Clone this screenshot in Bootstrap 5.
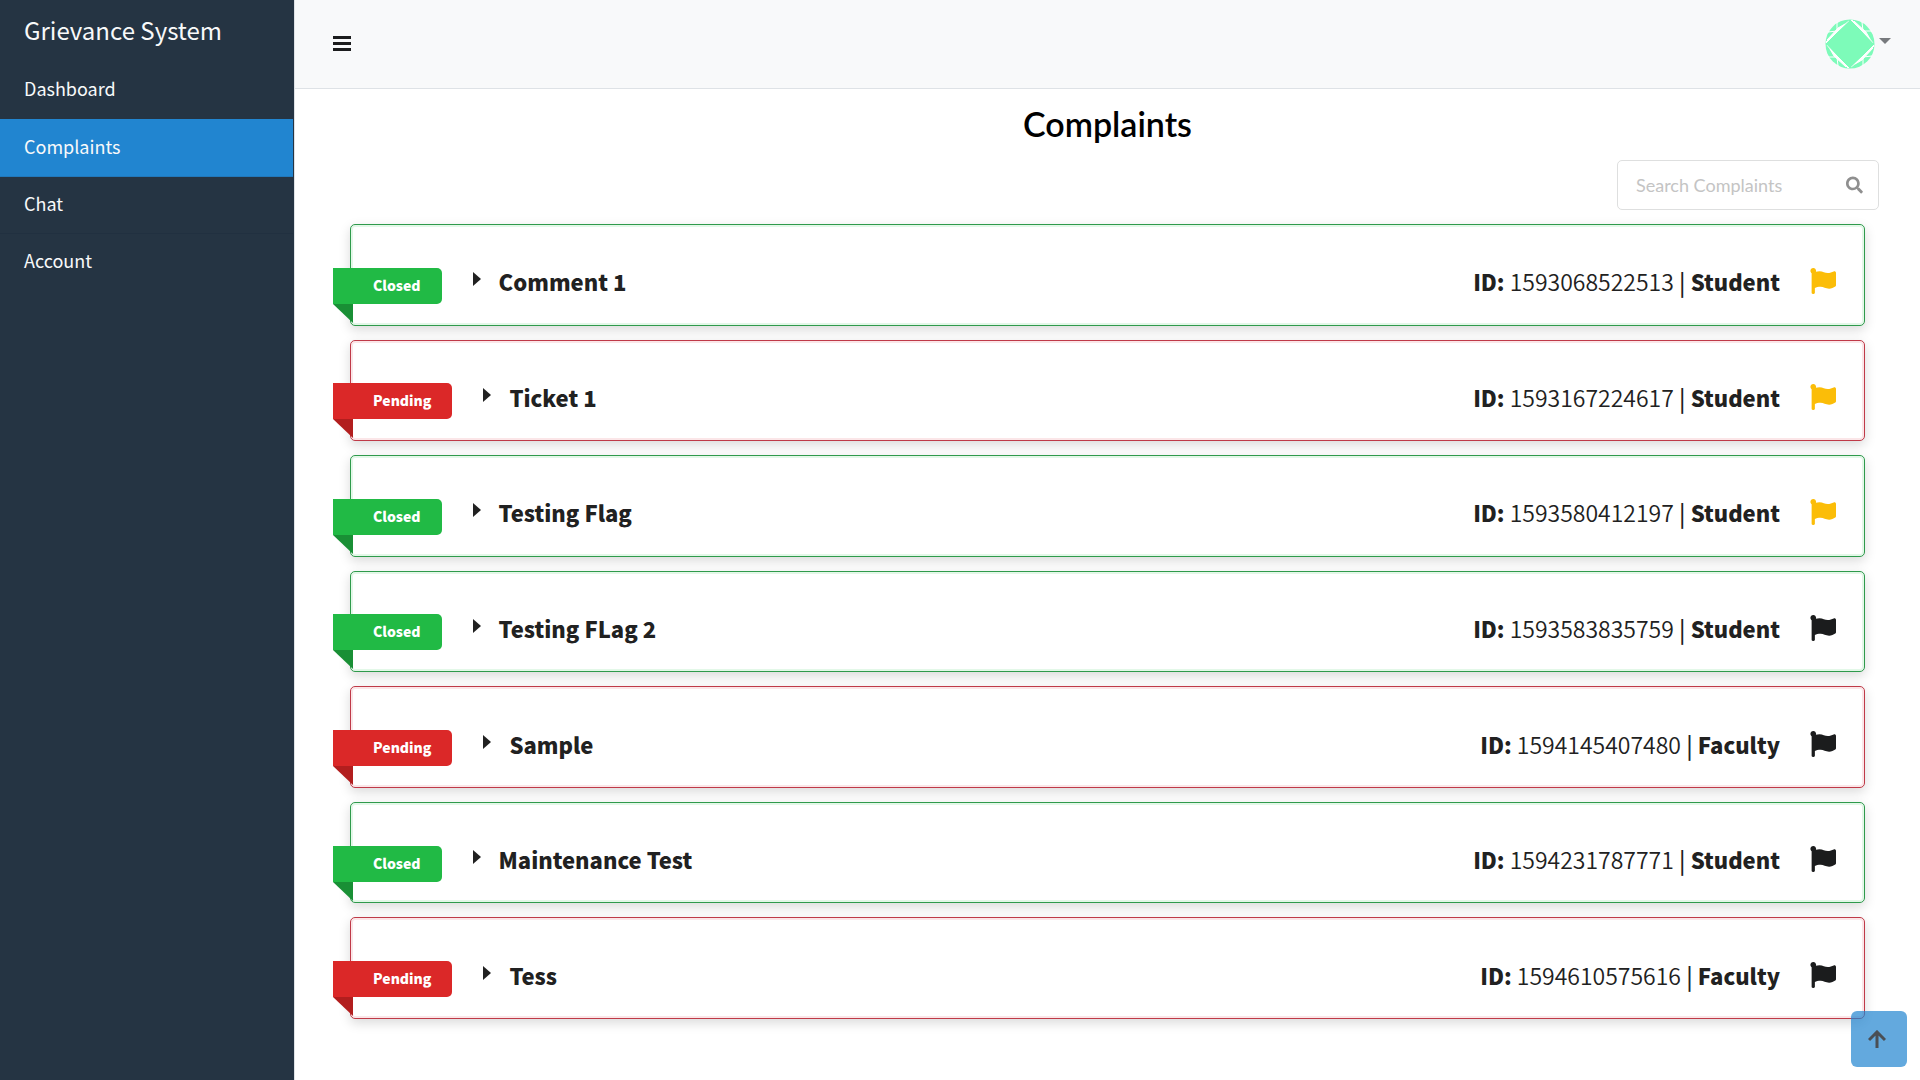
<!DOCTYPE html>
<html lang="en">
<head>
<meta charset="utf-8">
<meta name="viewport" content="width=device-width, initial-scale=1">
<title>Grievance System</title>
<link href="https://cdn.jsdelivr.net/npm/bootstrap@5.3.0/dist/css/bootstrap.min.css" rel="stylesheet">
<style>
  body { font-family: "Noto Sans CJK SC", "Noto Sans", sans-serif; color: #212529; background: #fff; }
  .side { width: 295px; flex: none; background: #253443; border-right: 1px solid #dee2e6; }
  .side-title { color: #f8f9fa; font-size: 24px; line-height: 28px; padding: 16px 24px 18px; }
  .side-link { display: block; color: #f8f9fa; background: #253443; font-size: 18px; line-height: 26px; padding: 13px 24px 17px; margin-right: 1px; border-bottom: 1px solid #213040; text-decoration: none; }
  .side-link.first { border-bottom-color: #253443; }
  .side-link.current { background: #2185d0; border-bottom-color: #2178bb; padding-top: 14px; }
  .topbar { height: 89px; background: #f8f9fa; border-bottom: 1px solid #dee2e6; padding: 0 29px 0 38px; }
  .plain-btn { border: 0; background: none; padding: 0; display: flex; align-items: center; }
  .page-title { font-family: Lato, sans-serif; font-weight: 600; font-size: 34px; line-height: 40px; color: #000; margin: 15px 0 16px; }
  .search-box { width: 262px; height: 50px; border: 1px solid #dedfdf; border-radius: 5px; padding: 0 15px 0 18px; margin-right: 41px; background: #fff; }
  .search-box input { font-family: Lato, sans-serif; font-size: 18px; border: 0; outline: 0; min-width: 0; padding: 0; background: none; color: #333; }
  .search-box input::placeholder { color: #c4c4c4; }
  .tickets { display: grid; grid-auto-rows: 1fr; gap: 14px; min-height: 795px; margin: 14px 55px 0; }
  .ticket { display: flex; align-items: center; padding: 13px 28px 0 0; border: 1px solid #2f9a4c; border-radius: 5px; background: #fff; box-shadow: inset 0 0 0 2px #e3f8e8, 0 4px 12px rgba(0,0,0,.15); }
  .ticket.pending { border-color: #bf3a48; box-shadow: inset 0 0 0 2px #fbe6e8, 0 4px 12px rgba(0,0,0,.15); }
  .ribbon { position: relative; margin: 9px 0 0 -18px; height: 36px; padding: 0 21px 0 40px; background: #21ba45; color: #fff; font-size: 14px; font-weight: 900; line-height: 34px; border-radius: 0 5px 5px 0; }
  .ribbon::after { content: ""; position: absolute; left: 0; top: 100%; border-style: solid; border-width: 0 20px 19px 0; border-color: transparent #198f35 transparent transparent; }
  .pending .ribbon { background: #db2828; }
  .pending .ribbon::after { border-right-color: #b21e1e; }
  .opener { margin-left: 31px; gap: 18px; color: #212121; font-size: 22px; font-weight: 900; line-height: 32px; }
  .opener svg { margin-bottom: 4px; }
  .meta-text { color: #212121; font-size: 23px; line-height: 32px; font-weight: 350; }
  .meta-text b { font-size: 22px; font-weight: 900; }
  .meta-text i { font-style: normal; font-weight: 500; }
  .flag { margin-left: 30px; color: #1b1c1d; }
  .flag.raised { color: #fbbd08; }
  .to-top { position: fixed; right: 13px; bottom: 13px; width: 56px; height: 56px; padding: 0 4px 0 0; border: 0; border-radius: 6px; background: rgba(33,133,208,.7); color: #4a4f55; }
</style>
</head>
<body>
<svg class="d-none">
  <symbol id="i-flag" viewBox="0 0 512 512"><path fill="currentColor" d="M349.565 98.783C295.978 98.783 251.721 64 184.348 64c-24.955 0-47.309 4.384-68.045 12.013a55.947 55.947 0 0 0 3.586-23.562C118.117 24.015 94.806 1.206 66.338.048 34.345-1.254 8 24.296 8 56c0 19.026 9.497 35.825 24 45.945V488c0 13.255 10.745 24 24 24h16c13.255 0 24-10.745 24-24v-94.400c28.311-12.064 63.582-22.122 114.435-22.122 53.588 0 97.844 34.783 165.217 34.783 48.169 0 86.667-16.294 122.505-40.858C506.840 359.452 512 349.571 512 339.045v-243.100c0-23.393-24.269-38.870-45.485-29.016-34.338 15.948-76.454 31.854-116.950 31.854z"/></symbol>
  <symbol id="i-caret" viewBox="0 0 8 14"><path fill="currentColor" d="M0 0l8 7-8 7z"/></symbol>
</svg>
<div class="d-flex min-vh-100">
  <nav class="side">
    <div class="side-title">Grievance System</div>
    <a class="side-link first" href="#">Dashboard</a>
    <a class="side-link current" href="#" aria-current="page">Complaints</a>
    <a class="side-link" href="#">Chat</a>
    <a class="side-link first" href="#">Account</a>
  </nav>
  <div class="flex-grow-1">
    <header class="topbar d-flex align-items-center justify-content-between">
      <button class="plain-btn" type="button" aria-label="Toggle sidebar">
        <svg width="18" height="16" viewBox="0 0 18 16" fill="#1b1c1d"><path d="M0 0h18v3H0zM0 6h18v3H0zM0 12h18v3H0z"/></svg>
      </button>
      <button class="plain-btn gap-1" type="button" aria-label="Account menu">
        <svg width="50" height="50" viewBox="0 0 50 50">
          <circle cx="25" cy="25" r="24.500" fill="#7dfbb9"/>
          <g fill="#fff" stroke="#fff">
            <path id="q" stroke-width="1" d="M26 1l12 11 10 12-11-12zM38 12h9M38 12l-1-9M27 1l11 11 1 1z M29 2l12 11 4 7-7-7z"/>
            <use href="#q" transform="rotate(90 25 25)"/>
            <use href="#q" transform="rotate(180 25 25)"/>
            <use href="#q" transform="rotate(270 25 25)"/>
          </g>
          <path fill="#7dfbb9" d="M25 1l24 24-24 24L1 25z"/>
        </svg>
        <svg width="12" height="12" viewBox="0 0 12 12"><path fill="#777a7d" d="M0 0h12L6 6z"/></svg>
      </button>
    </header>
    <main>
      <h1 class="page-title text-center">Complaints</h1>
      <div class="d-flex justify-content-end">
        <label class="search-box d-flex align-items-center">
          <input class="flex-grow-1" type="text" placeholder="Search Complaints" aria-label="Search Complaints">
          <svg width="18" height="18" viewBox="0 0 512 512" fill="#8f8f8f"><path d="M505 442.700L405.300 343c-4.500-4.500-10.600-7-17-7H372c27.600-35.300 44-79.700 44-128C416 93.100 322.900 0 208 0S0 93.100 0 208s93.100 208 208 208c48.300 0 92.700-16.400 128-44v16.300c0 6.400 2.500 12.500 7 17l99.700 99.700c9.400 9.400 24.600 9.400 33.900 0l28.300-28.300c9.400-9.400 9.400-24.600.1-34zM208 336c-70.700 0-128-57.200-128-128 0-70.700 57.200-128 128-128 70.700 0 128 57.200 128 128 0 70.700-57.200 128-128 128z"/></svg>
        </label>
      </div>
      <div class="tickets">
        <article class="ticket">
          <span class="ribbon">Closed</span>
          <button class="plain-btn opener" type="button"><svg width="8" height="14"><use href="#i-caret"/></svg>Comment 1</button>
          <span class="meta-text ms-auto"><b>ID:</b> 1593068522513 <i>|</i> <b>Student</b></span>
          <button class="plain-btn flag raised" type="button" aria-label="Flag"><svg width="26" height="26"><use href="#i-flag"/></svg></button>
        </article>
        <article class="ticket pending">
          <span class="ribbon">Pending</span>
          <button class="plain-btn opener" type="button"><svg width="8" height="14"><use href="#i-caret"/></svg>Ticket 1</button>
          <span class="meta-text ms-auto"><b>ID:</b> 1593167224617 <i>|</i> <b>Student</b></span>
          <button class="plain-btn flag raised" type="button" aria-label="Flag"><svg width="26" height="26"><use href="#i-flag"/></svg></button>
        </article>
        <article class="ticket">
          <span class="ribbon">Closed</span>
          <button class="plain-btn opener" type="button"><svg width="8" height="14"><use href="#i-caret"/></svg>Testing Flag</button>
          <span class="meta-text ms-auto"><b>ID:</b> 1593580412197 <i>|</i> <b>Student</b></span>
          <button class="plain-btn flag raised" type="button" aria-label="Flag"><svg width="26" height="26"><use href="#i-flag"/></svg></button>
        </article>
        <article class="ticket">
          <span class="ribbon">Closed</span>
          <button class="plain-btn opener" type="button"><svg width="8" height="14"><use href="#i-caret"/></svg>Testing FLag 2</button>
          <span class="meta-text ms-auto"><b>ID:</b> 1593583835759 <i>|</i> <b>Student</b></span>
          <button class="plain-btn flag" type="button" aria-label="Flag"><svg width="26" height="26"><use href="#i-flag"/></svg></button>
        </article>
        <article class="ticket pending">
          <span class="ribbon">Pending</span>
          <button class="plain-btn opener" type="button"><svg width="8" height="14"><use href="#i-caret"/></svg>Sample</button>
          <span class="meta-text ms-auto"><b>ID:</b> 1594145407480 <i>|</i> <b>Faculty</b></span>
          <button class="plain-btn flag" type="button" aria-label="Flag"><svg width="26" height="26"><use href="#i-flag"/></svg></button>
        </article>
        <article class="ticket">
          <span class="ribbon">Closed</span>
          <button class="plain-btn opener" type="button"><svg width="8" height="14"><use href="#i-caret"/></svg>Maintenance Test</button>
          <span class="meta-text ms-auto"><b>ID:</b> 1594231787771 <i>|</i> <b>Student</b></span>
          <button class="plain-btn flag" type="button" aria-label="Flag"><svg width="26" height="26"><use href="#i-flag"/></svg></button>
        </article>
        <article class="ticket pending">
          <span class="ribbon">Pending</span>
          <button class="plain-btn opener" type="button"><svg width="8" height="14"><use href="#i-caret"/></svg>Tess</button>
          <span class="meta-text ms-auto"><b>ID:</b> 1594610575616 <i>|</i> <b>Faculty</b></span>
          <button class="plain-btn flag" type="button" aria-label="Flag"><svg width="26" height="26"><use href="#i-flag"/></svg></button>
        </article>
      </div>
    </main>
  </div>
</div>
<button class="to-top d-flex align-items-center justify-content-center" type="button" aria-label="Back to top">
  <svg width="18" height="18" viewBox="0 0 18 18" fill="none" stroke="currentColor" stroke-width="3"><path d="M9 18V2M1 10l8-8 8 8"/></svg>
</button>
<script src="https://cdn.jsdelivr.net/npm/bootstrap@5.3.0/dist/js/bootstrap.bundle.min.js"></script>
</body>
</html>
